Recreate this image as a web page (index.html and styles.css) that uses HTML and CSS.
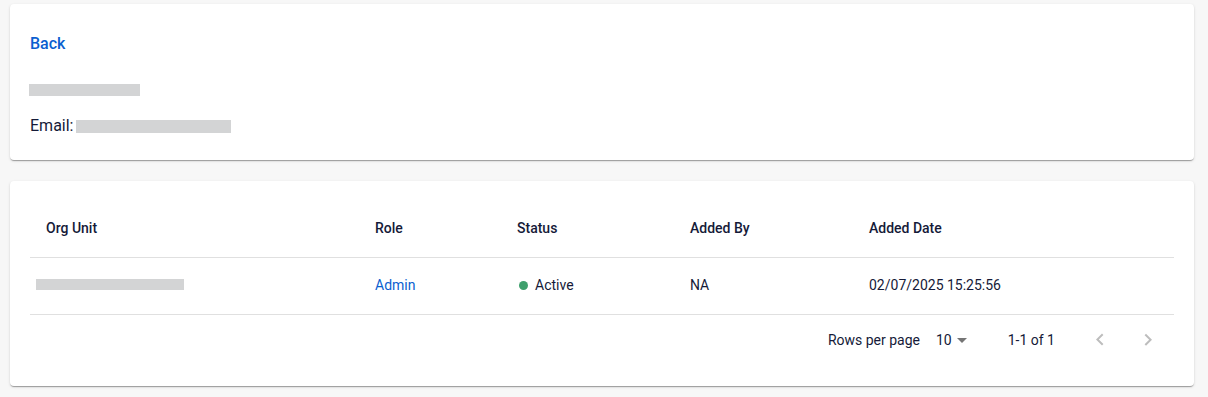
FILE: index.html
```html
<!DOCTYPE html>
<html>
<head>
<meta charset="utf-8">
<link rel="stylesheet" href="styles.css">
</head>
<body>
<div class="page">
  <section class="card info">
    <a class="back" href="#">Back</a>
    <div class="line name"><span class="redact r-name"></span></div>
    <div class="line email">Email: <span class="redact r-email"></span></div>
  </section>
  <section class="card tablecard">
    <table class="grid">
      <colgroup>
        <col class="c1"><col class="c2"><col class="c3"><col class="c4"><col class="c5">
      </colgroup>
      <thead>
        <tr><th>Org Unit</th><th>Role</th><th>Status</th><th>Added By</th><th>Added Date</th></tr>
      </thead>
      <tbody>
        <tr>
          <td><span class="redact r-org"></span></td>
          <td><a class="link" href="#">Admin</a></td>
          <td><span class="dot"></span>Active</td>
          <td>NA</td>
          <td>02/07/2025 15:25:56</td>
        </tr>
      </tbody>
    </table>
    <div class="pager">
      <span class="rpp">Rows per page</span>
      <span class="select">10<svg class="drop" viewBox="0 0 24 24" width="24" height="24"><path d="M7 10l5 5 5-5z"/></svg></span>
      <span class="range">1-1 of 1</span>
      <span class="actions">
        <span class="iconbtn"><svg viewBox="0 0 24 24" width="24" height="24"><path d="M15.41 16.09l-4.58-4.59 4.58-4.59L14 5.5l-6 6 6 6z"/></svg></span>
        <span class="iconbtn"><svg viewBox="0 0 24 24" width="24" height="24"><path d="M8.59 16.34l4.58-4.59-4.58-4.59L10 5.75l6 6-6 6z"/></svg></span>
      </span>
    </div>
  </section>
</div>
</body>
</html>
```
FILE: styles.css
```css
* { box-sizing: border-box; }
html, body { margin: 0; padding: 0; }
body {
  background: #f7f7f7;
  font-family: Roboto, "Noto Sans", Arial, sans-serif;
  color: #151a38;
  width: 1208px;
  height: 397px;
  overflow: hidden;
}
.page {
  padding: 4px 14px 0 10px;
  display: flex;
  flex-direction: column;
  gap: 21px;
}
.card {
  background: #fff;
  border-radius: 4px;
  box-shadow: 0 2px 1px -1px rgba(0,0,0,0.2), 0 1px 1px 0 rgba(0,0,0,0.14), 0 1px 3px 0 rgba(0,0,0,0.12);
}
.info {
  height: 156px;
  padding: 28px 20px 0 20px;
  display: flex;
  flex-direction: column;
}
.back {
  color: #0b5fd0;
  font-size: 16px;
  font-weight: 500;
  line-height: 24px;
  text-decoration: none;
  align-self: flex-start;
}
.line {
  font-size: 16px;
  line-height: 24px;
  display: flex;
  align-items: center;
}
.name { margin-top: 26px; }
.email { margin-top: 18px; }
.redact { display: inline-block; background: #d3d4d5; }
.r-name { width: 111px; height: 12px; margin-left: -1px; margin-top: 2px; }
.r-email { width: 155px; height: 13px; margin-left: 3px; }
.tablecard {
  height: 205px;
  padding: 20px 20px 0 20px;
}
.grid {
  width: 1144px;
  border-collapse: collapse;
  table-layout: fixed;
  font-size: 14px;
}
.c1 { width: 329px; }
.c2 { width: 142px; }
.c3 { width: 173px; }
.c4 { width: 179px; }
.c5 { width: 321px; }
.grid th {
  text-align: left;
  font-weight: 500;
  height: 56px;
  padding: 0 16px 2px 16px;
  border-bottom: 1px solid #e0e0e0;
}
.grid td {
  height: 57px;
  padding: 0 16px 2px 16px;
  border-bottom: 1px solid #e0e0e0;
}
.r-org { width: 148px; height: 11px; margin-left: -10px; vertical-align: middle; position: relative; top: -1px; }
.link { color: #0b5fd0; text-decoration: none; }
.dot {
  display: inline-block;
  width: 9px;
  height: 9px;
  border-radius: 50%;
  background: #3fa06d;
  margin: 0 7px 0 2px;
  vertical-align: 0px;
}
.pager {
  height: 52px;
  display: flex;
  align-items: center;
  justify-content: flex-end;
  font-size: 14px;
  padding-right: 2px;
  padding-bottom: 1px;
}
.select {
  display: inline-flex;
  align-items: center;
  margin-left: 16px;
  margin-right: 34px;
}
.drop { fill: #757575; margin-left: -2px; }
.actions { display: flex; margin-left: 21px; }
.iconbtn {
  width: 48px;
  height: 48px;
  display: flex;
  align-items: center;
  justify-content: center;
}
.iconbtn svg { fill: #bdbdbd; }
```
